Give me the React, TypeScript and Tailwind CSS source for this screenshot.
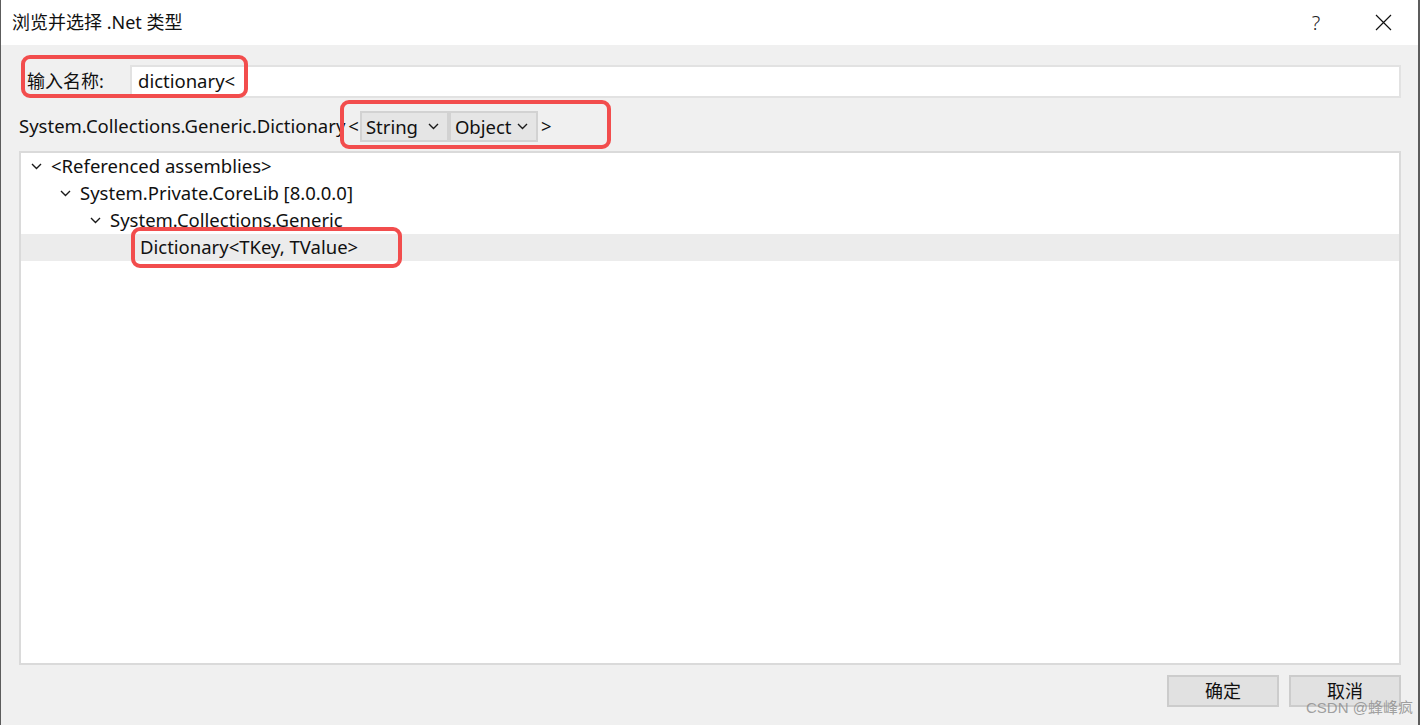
import React from "react";

const FONT = '"Noto Sans", "Noto Sans CJK SC", sans-serif';

function Chevron({ className = "" }: { className?: string }) {
  return (
    <svg width="11" height="7" viewBox="0 0 11 7" className={className}>
      <path d="M1 1 L5.5 5.5 L10 1" fill="none" stroke="#1a1a1a" strokeWidth="1.4" />
    </svg>
  );
}

function Combo({ label }: { label: string }) {
  return (
    <div className="w-[89px] h-[31px] bg-[#e5e5e5] border-2 border-[#d2d2d2] flex items-center justify-between pl-[4px] pr-[8px]">
      <span>{label}</span>
      <Chevron />
    </div>
  );
}

function TreeRow({
  indent,
  text,
  chevron,
  selected,
}: {
  indent: number;
  text: string;
  chevron?: boolean;
  selected?: boolean;
}) {
  return (
    <div className={`h-[27px] flex items-center ${selected ? "bg-[#ececec]" : ""}`}>
      <div style={{ width: indent }} className="shrink-0" />
      <div className="w-[30px] shrink-0 flex items-center justify-start pl-[10px]">
        {chevron ? <Chevron /> : null}
      </div>
      <span className="whitespace-nowrap -mt-[2px]">{text}</span>
    </div>
  );
}

export default function App() {
  return (
    <div
      className="relative w-[1420px] h-[725px] bg-[#f0f0f0] flex flex-col text-[18.5px] text-[#111] border-l border-r-2 border-[#5c5c5c] overflow-hidden"
      style={{ fontFamily: FONT }}
    >
      {/* Title bar */}
      <div className="h-[45px] bg-white flex items-center shrink-0 text-[18px]">
        <span className="pl-[11px] flex-1">浏览并选择 .Net 类型</span>
        <span className="w-[30px] text-center text-[20px] font-light text-[#222] mr-[44px]">?</span>
        <svg width="17" height="17" viewBox="0 0 17 17" className="mr-[26px]">
          <path d="M1 1 L16 16 M16 1 L1 16" stroke="#111" strokeWidth="1.2" fill="none" />
        </svg>
      </div>

      {/* Body */}
      <div className="flex flex-col pl-[18px] pr-[17px] flex-1">
        {/* Name input row */}
        <div className="flex items-center mt-[20px] h-[33px]">
          <span className="w-[111px] pl-[8px] shrink-0 text-[18px]">输入名称:</span>
          <div className="flex-1 h-[33px] bg-white border-2 border-[#e2e2e2] flex items-center pl-[6px]">
            <span className="-mt-[2px]">dictionary&lt;</span>
          </div>
        </div>

        {/* Type row */}
        <div className="flex items-center mt-[13px] h-[31px]">
          <span className="whitespace-nowrap -mt-[2px]">System.Collections.Generic.Dictionary</span>
          <span className="ml-[3px] mr-[1px] -mt-[2px]">&lt;</span>
          <Combo label="String" />
          <Combo label="Object" />
          <span className="ml-[3px] -mt-[2px]">&gt;</span>
        </div>

        {/* Tree */}
        <div className="mt-[9px] h-[514px] bg-white border-2 border-[#dadada] flex flex-col">
          <TreeRow indent={0} chevron text="<Referenced assemblies>" />
          <TreeRow indent={29} chevron text="System.Private.CoreLib [8.0.0.0]" />
          <TreeRow indent={59} chevron text="System.Collections.Generic" />
          <TreeRow indent={89} selected text="Dictionary<TKey, TValue>" />
        </div>

        {/* Buttons */}
        <div className="flex justify-end mt-[10px] gap-[10px] text-[18px]">
          <div className="w-[112px] h-[32px] bg-[#e1e1e1] border-2 border-[#cccccc] flex items-center justify-center">
            确定
          </div>
          <div className="w-[112px] h-[32px] bg-[#e1e1e1] border-2 border-[#cccccc] flex items-center justify-center">
            取消
          </div>
        </div>
      </div>

      {/* Red annotation boxes */}
      <div className="absolute left-[20px] top-[55px] w-[227px] h-[43px] border-[4px] border-[#f24d4d] rounded-[9px]" />
      <div className="absolute left-[339px] top-[100px] w-[271px] h-[49px] border-[4px] border-[#f24d4d] rounded-[9px]" />
      <div className="absolute left-[130px] top-[227px] w-[271px] h-[41px] border-[4px] border-[#f24d4d] rounded-[9px]" />

      {/* Watermark */}
      <div
        className="absolute left-[1305px] top-[697px] text-[15px] text-[#8a8a8a]/80 whitespace-nowrap"
        style={{ fontFamily: '"Liberation Sans", "Noto Sans CJK SC", sans-serif' }}
      >
        CSDN @蜂峰疯
      </div>
    </div>
  );
}
